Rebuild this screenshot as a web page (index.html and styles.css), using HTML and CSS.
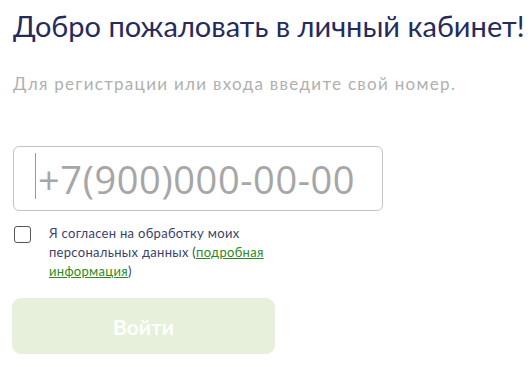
FILE: index.html
```html
<!DOCTYPE html>
<html lang="ru">
<head>
<meta charset="utf-8">
<title>Личный кабинет</title>
<link rel="stylesheet" href="styles.css">
</head>
<body>

<!-- login form -->
<div class="login">
	<h1 class="login-title">Добро пожаловать в личный кабинет!</h1>
	<p class="login-hint">Для регистрации или входа введите свой номер.</p>

	<div class="phone-wrap">
		<input class="phone" type="tel" placeholder="+7(900)000-00-00">
	</div>

	<label class="agree">
		<input class="agree-box" type="checkbox">
		<span class="agree-text">Я согласен на обработку моих персональных данных (<a href="#">подробная информация</a>)</span>
	</label>

	<button class="btn-login" disabled>Войти</button>
</div>

</body>
</html>
```

FILE: styles.css
```css
body {
  margin: 0;
  background: #fff;
  font-family: Lato, "Noto Sans", sans-serif;
}
.login {
  padding: 8px 0 0 13px;
}
.login-title {
  margin: 0;
  font-size: 29px;
  font-weight: 400;
  line-height: 36px;
  color: #262b5e;
  white-space: nowrap;
}
.login-hint {
  margin: 30px 0 0 0;
  font-size: 17px;
  letter-spacing: 1.3px;
  line-height: 20px;
  color: #b0b0b0;
  white-space: nowrap;
}
.phone-wrap {
  position: relative;
  width: 370px;
  margin-top: 52px;
}
.phone-wrap::before {
  content: "";
  position: absolute;
  left: 22px;
  top: 7px;
  width: 1px;
  height: 46px;
  background: #999;
}
.phone {
  box-sizing: border-box;
  width: 370px;
  height: 65px;
  padding: 0 0 0 24px;
  border: 1px solid #c4c4c4;
  border-radius: 6px;
  font-family: "Open Sans", sans-serif;
  font-size: 38px;
  letter-spacing: 0.6px;
  color: #555;
  outline: none;
}
.phone::placeholder {
  color: #a6a6a6;
}
.agree {
  display: flex;
  gap: 18px;
  margin-top: 13px;
  width: 275px;
}
.agree-box {
  appearance: none;
  flex: none;
  box-sizing: border-box;
  width: 17px;
  height: 17px;
  margin: 2px 0 0 1px;
  border: 1px solid #555;
  border-radius: 3px;
  background: #fff;
}
.agree-text {
  font-size: 13px;
  letter-spacing: 0.3px;
  line-height: 19px;
  color: #3b3f6b;
}
.agree-text a {
  color: #2f8a1c;
}
.btn-login {
  display: block;
  width: 263px;
  height: 56px;
  margin: 17px 0 0 -1px;
  border: none;
  border-radius: 9px;
  background: #e6f0da;
  color: #fff;
  font-family: Lato, sans-serif;
  font-size: 21px;
  font-weight: 700;
}
```
